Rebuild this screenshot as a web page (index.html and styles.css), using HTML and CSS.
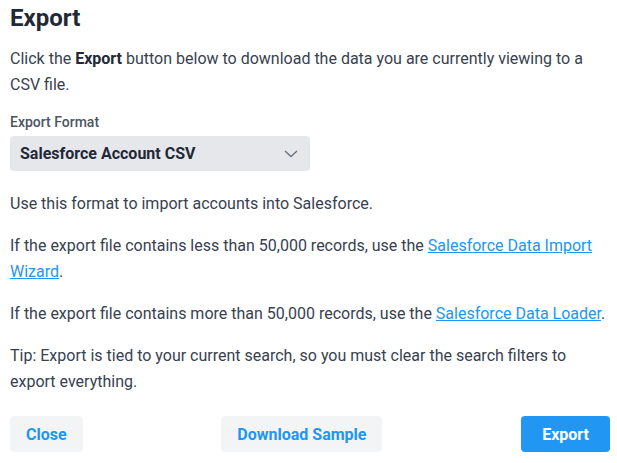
FILE: index.html
```html
<!DOCTYPE html>
<html lang="en">
<head>
  <meta charset="UTF-8">
  <meta name="viewport" content="width=device-width, initial-scale=1.0">
  <title>Export</title>
  <link rel="stylesheet" href="styles.css">
</head>
<body>
  <div class="dialog">
    <h1>Export</h1>

    <p class="intro">Click the <strong>Export</strong> button below to download the data you are currently viewing to a CSV file.</p>

    <!-- Format picker -->
    <div class="field">
      <label class="field-label">Export Format</label>
      <div class="select-box">
        <span>Salesforce Account CSV</span>
        <svg width="14" height="8" viewBox="0 0 14 8"><polyline points="1,1 7,6.5 13,1" fill="none" stroke="#6b7280" stroke-width="1.4"/></svg>
      </div>
    </div>

    <div class="notes">
      <p>Use this format to import accounts into Salesforce.</p>
      <p>If the export file contains less than 50,000 records, use the <a href="#">Salesforce Data Import Wizard</a>.</p>
      <p>If the export file contains more than 50,000 records, use the <a href="#">Salesforce Data Loader</a>.</p>
      <p>Tip: Export is tied to your current search, so you must clear the search filters to export everything.</p>
    </div>

    <div class="actions">
      <button class="btn btn-light">Close</button>
      <button class="btn btn-light">Download Sample</button>
      <button class="btn btn-primary">Export</button>
    </div>
  </div>
</body>
</html>
```

FILE: styles.css
```css
body {
  margin: 0;
  font-family: Roboto, "Liberation Sans", sans-serif;
  color: #374151;
  background: #fff;
}
.dialog {
  width: 600px;
  padding: 0 7px 0 10px;
  display: flex;
  flex-direction: column;
}
h1 {
  margin: 2px 0 12px;
  font-size: 24px;
  line-height: 32px;
  font-weight: 700;
  color: #1f2937;
}
p {
  margin: 0;
  font-size: 16px;
  line-height: 26px;
}
.intro strong {
  font-weight: 700;
  color: #1f2937;
}
.field {
  margin-top: 14px;
  display: flex;
  flex-direction: column;
  gap: 4px;
}
.field-label {
  font-size: 14px;
  line-height: 20px;
  font-weight: 500;
  color: #4b5563;
}
.select-box {
  width: 300px;
  height: 35px;
  box-sizing: border-box;
  padding: 0 10px;
  display: flex;
  align-items: center;
  justify-content: space-between;
  background: #e5e7eb;
  border-radius: 4px;
  font-size: 16px;
  font-weight: 700;
  color: #1f2937;
}
.select-box svg {
  margin-right: 2px;
}
.notes {
  margin-top: 20px;
  display: flex;
  flex-direction: column;
  gap: 16px;
}
.notes a {
  color: #2196f3;
  text-decoration: underline;
}
.actions {
  margin-top: 21px;
  display: flex;
  justify-content: space-between;
}
.btn {
  height: 36px;
  padding: 0 16px;
  border: none;
  border-radius: 4px;
  font-family: inherit;
  font-size: 16px;
  font-weight: 700;
  cursor: pointer;
}
.btn-light {
  background: #f3f4f6;
  color: #2196f3;
}
.btn-primary {
  background: #2196f3;
  color: #fff;
  padding: 0 21px;
}
```
